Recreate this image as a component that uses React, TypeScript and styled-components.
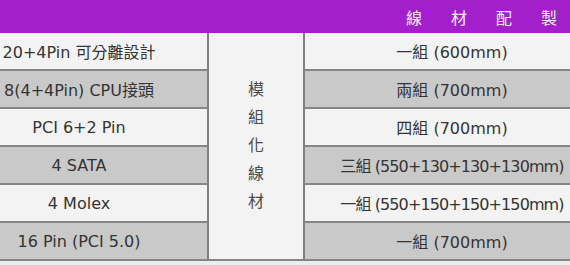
import { Fragment } from 'react';
import { createGlobalStyle, styled } from 'styled-components';

const GlobalStyle = createGlobalStyle`
  html, body {
    margin: 0;
    padding: 0;
    background: #ececec;
    overflow: hidden;
  }
  body {
    font-family: "DejaVu Sans", "Noto Sans CJK TC", sans-serif;
  }
`;

const Wrapper = styled.div`
  width: 648px;
  margin-left: -49px;
`;

const HeaderBar = styled.div`
  height: 33px;
  background: #a41fcc;
  display: flex;
  align-items: center;
  justify-content: flex-end;
  gap: 29px;
  padding-right: 42px;
  box-sizing: border-box;
  color: #fbf1ff;
  font-size: 16px;
`;

const Grid = styled.div`
  display: grid;
  grid-template-columns: 256px 98px 294px;
  grid-auto-rows: 38px;
  font-size: 16px;
  color: #343434;
`;

const Cell = styled.div<{ $dark?: boolean; $col: number; $tight?: boolean }>`
  grid-column: ${(p) => p.$col};
  display: flex;
  align-items: center;
  justify-content: center;
  white-space: nowrap;
  box-sizing: border-box;
  border-bottom: 2px solid #858585;
  background: ${(p) => (p.$dark ? '#c9c9c9' : '#f3f3f3')};
  letter-spacing: ${(p) => (p.$tight ? '-0.9px' : 'normal')};
`;

const SideCell = styled.div`
  grid-column: 2;
  grid-row: 1 / span 6;
  display: flex;
  flex-direction: column;
  align-items: center;
  justify-content: center;
  box-sizing: border-box;
  background: #f3f3f3;
  border-left: 2px solid #808080;
  border-right: 2px solid #808080;
  border-bottom: 2px solid #858585;
  color: #4a4a4a;
  line-height: 28px;
`;

const rows = [
  ['20+4Pin 可分離設計', '一組 (600mm)'],
  ['8(4+4Pin) CPU接頭', '兩組 (700mm)'],
  ['PCI 6+2 Pin', '四組 (700mm)'],
  ['4 SATA', '三組 (550+130+130+130mm)'],
  ['4 Molex', '一組 (550+150+150+150mm)'],
  ['16 Pin (PCI 5.0)', '一組 (700mm)'],
];

export default function App() {
  return (
    <>
      <GlobalStyle />
      <Wrapper>
        <HeaderBar>
          {'線材配製'.split('').map((c) => (
            <span key={c}>{c}</span>
          ))}
        </HeaderBar>
        <Grid>
          {rows.map(([name, spec], i) => (
            <Fragment key={i}>
              <Cell $col={1} $dark={i % 2 === 1} style={{ gridRow: i + 1 }}>
                {name}
              </Cell>
              <Cell
                $col={3}
                $dark={i % 2 === 1}
                $tight={spec.length > 16}
                style={{ gridRow: i + 1 }}
              >
                {spec}
              </Cell>
            </Fragment>
          ))}
          <SideCell>
            {'模組化線材'.split('').map((c) => (
              <span key={c}>{c}</span>
            ))}
          </SideCell>
        </Grid>
      </Wrapper>
    </>
  );
}
